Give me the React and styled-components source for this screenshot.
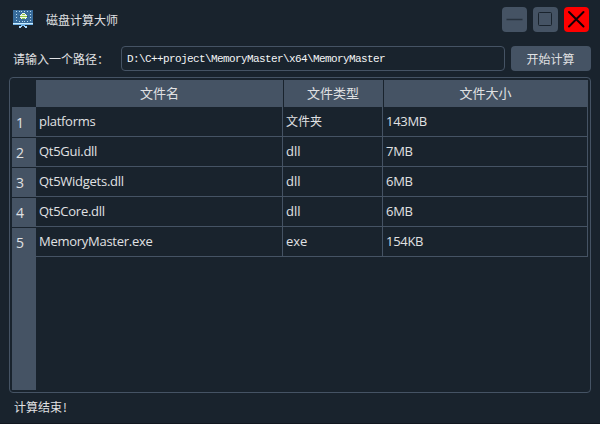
import React from "react";
import styled, { createGlobalStyle } from "styled-components";

const base = "#19232d";
const raised = "#455364";
const ink = "#e0e1e3";

const GlobalStyle = createGlobalStyle`
  * { box-sizing: border-box; }
  body { margin: 0; background: ${base}; }
`;

const Window = styled.div`
  display: flex;
  flex-direction: column;
  width: 600px;
  height: 424px;
  overflow: hidden;
  background: ${base};
  border-bottom: 1px solid #10171f;
  color: ${ink};
  font: 12px/16px "Noto Sans CJK SC", sans-serif;
  white-space: nowrap;
`;

const TitleBar = styled.header`
  display: flex;
  align-items: center;
  height: 39px;
  padding: 0 11px 0 12px;
`;

const Title = styled.h1`
  flex: 1;
  margin: 1px 0 0 12px;
  font-size: 12px;
  font-weight: 400;
`;

const WindowControls = styled.div`
  display: flex;
  gap: 6px;
`;

const ControlButton = styled.button`
  width: 25px;
  height: 25px;
  padding: 0;
  border: 0;
  border-radius: 4px;
  background: ${(p) => (p.$danger ? "#ff0000" : raised)};
  svg { display: block; }
`;

const PathRow = styled.div`
  display: flex;
  align-items: center;
  height: 25px;
  margin: 7px 9px 0 13px;
`;

const PathLabel = styled.label`
  width: 108px;
`;

const PathInput = styled.input`
  width: 384px;
  height: 25px;
  margin-right: 6px;
  padding: 1px 5px 0;
  border: 1px solid ${raised};
  border-radius: 4px;
  outline: 0;
  background: ${base};
  color: #f4f5f6;
  font: 11px "Liberation Mono", monospace;
  letter-spacing: -0.6px;
`;

const RunButton = styled.button`
  width: 80px;
  height: 25px;
  padding: 0 1px 0 0;
  border: 0;
  border-radius: 4px;
  background: ${raised};
  color: ${ink};
  font: 12px/25px "Noto Sans CJK SC", sans-serif;
`;

const TableFrame = styled.section`
  display: grid;
  grid-template-columns: 24px 1fr;
  grid-template-rows: 27px 1fr;
  width: 582px;
  height: 316px;
  margin: 6px 0 0 9px;
  padding: 2px;
  border: 1px solid ${raised};
  border-radius: 4px;
  font-family: "Open Sans", "Noto Sans CJK SC", sans-serif;
`;

const columns = "247px 100px 205px";

const ColumnHeads = styled.div`
  grid-column: 2;
  display: grid;
  grid-template-columns: ${columns};
`;

const ColumnHead = styled.div`
  border-right: 1px solid ${base};
  background: ${raised};
  font-size: 13px;
  line-height: 27px;
  text-align: center;
  &:not(:first-child) { margin-left: 1px; margin-right: -1px; padding-right: 1px; }
  &:first-child { margin-right: -1px; }
  &:last-child { margin-right: 0; border-right: 0; }
`;

const RowHeads = styled.div`
  display: flex;
  flex-direction: column;
  background: ${raised};
  height: 283px;
`;

const RowHead = styled.div`
  height: ${(p) => (p.$first ? 31 : 30)}px;
  padding-left: 4px;
  border-bottom: 1px solid ${(p) => (p.$last ? raised : base)};
  font-size: 14px;
  line-height: ${(p) => (p.$first ? 32 : 30)}px;
`;

const Row = styled.div`
  display: grid;
  grid-template-columns: ${columns};
  height: 30px;
`;

const Cell = styled.div`
  padding-left: 3px;
  border-right: 1px solid ${raised};
  border-bottom: 1px solid ${raised};
  font-size: 13px;
  line-height: 29px;
  letter-spacing: ${(p) => p.$tracking || 0}px;
`;

const TypeText = styled.span`
  font-size: ${(p) => (p.$cjk ? 12 : 13)}px;
`;

const Status = styled.footer`
  margin: 6px 0 0 14px;
`;

const Mark = styled.span`
  margin-left: 1px;
`;

const files = [
  ["platforms", "文件夹", "143MB"],
  ["Qt5Gui.dll", "dll", "7MB"],
  ["Qt5Widgets.dll", "dll", "6MB"],
  ["Qt5Core.dll", "dll", "6MB"],
  ["MemoryMaster.exe", "exe", "154KB"],
];

function MonitorIcon() {
  return (
    <svg width="22" height="19" viewBox="0 0 22 19" shapeRendering="crispEdges">
      <path fill="#386c9b" d="M1 0h20v13H1z" />
      <path fill="#c9ecff" d="M1 13h20v1H1z" />
      <path fill="#72b4e8" d="M1 14h20v1H1zM9 15h4v1H9z" />
      <path fill="#a9d8ff" d="M7 16h3v1H9v1H7zM12 16h3v2h-2v-1h-1z" />
      <path
        fill="#b9dcf2"
        d="M4 1h1v1H4zM7 1h1v1H7zM9 1h1v1H9zM12 1h1v1h-1zM15 1h1v1h-1zM18 1h1v1h-1zM4 4h1v1H4zM4 7h1v1H4zM4 10h1v1H4zM18 4h1v1h-1zM18 7h1v1h-1zM18 10h1v1h-1zM7 11h1v1H7zM10 11h1v1h-1zM12 11h1v1h-1zM15 11h1v1h-1z"
      />
      <path fill="#f2f7e9" d="M10 3h3v1h1v1h1v3h-1v1H9V8H8V5h1V4h1z" />
      <path fill="#8fc741" d="M10 4h3v1h-3zM8 6h7v1H8zM10 8h3v1h-3z" />
      <path fill="#264f70" d="M7 6h1v1H7zM15 6h1v1h-1z" />
    </svg>
  );
}

export default function App() {
  return (
    <>
      <GlobalStyle />
      <Window>
        <TitleBar>
          <MonitorIcon />
          <Title>磁盘计算大师</Title>
          <WindowControls>
            <ControlButton aria-label="最小化">
              <svg width="25" height="25"><path d="M4.5 12.5H20.5" stroke="#27323e" strokeWidth="1.5" /></svg>
            </ControlButton>
            <ControlButton aria-label="最大化">
              <svg width="25" height="25"><rect x="5.5" y="5.5" width="13" height="13" rx="1" fill="none" stroke={base} /></svg>
            </ControlButton>
            <ControlButton $danger aria-label="关闭">
              <svg width="25" height="25"><path d="M5 5L19.5 19.5M19.5 5L5 19.5" stroke="#120006" strokeWidth="2" strokeLinecap="round" /></svg>
            </ControlButton>
          </WindowControls>
        </TitleBar>
        <PathRow>
          <PathLabel htmlFor="path">请输入一个路径：</PathLabel>
          <PathInput id="path" readOnly value={"D:\\C++project\\MemoryMaster\\x64\\MemoryMaster"} />
          <RunButton>开始计算</RunButton>
        </PathRow>
        <TableFrame>
          <ColumnHeads>
            <ColumnHead>文件名</ColumnHead>
            <ColumnHead>文件类型</ColumnHead>
            <ColumnHead>文件大小</ColumnHead>
          </ColumnHeads>
          <RowHeads>
            {files.map((file, i) => (
              <RowHead key={file[0]} $first={i === 0} $last={i === files.length - 1}>{i + 1}</RowHead>
            ))}
          </RowHeads>
          <div>
            {files.map(([name, type, size]) => (
              <Row key={name}>
                <Cell $tracking={-0.27}>{name}</Cell>
                <Cell><TypeText $cjk={type === "文件夹"}>{type}</TypeText></Cell>
                <Cell $tracking={-0.3}>{size}</Cell>
              </Row>
            ))}
          </div>
        </TableFrame>
        <Status>计算结束<Mark>!</Mark></Status>
      </Window>
    </>
  );
}
